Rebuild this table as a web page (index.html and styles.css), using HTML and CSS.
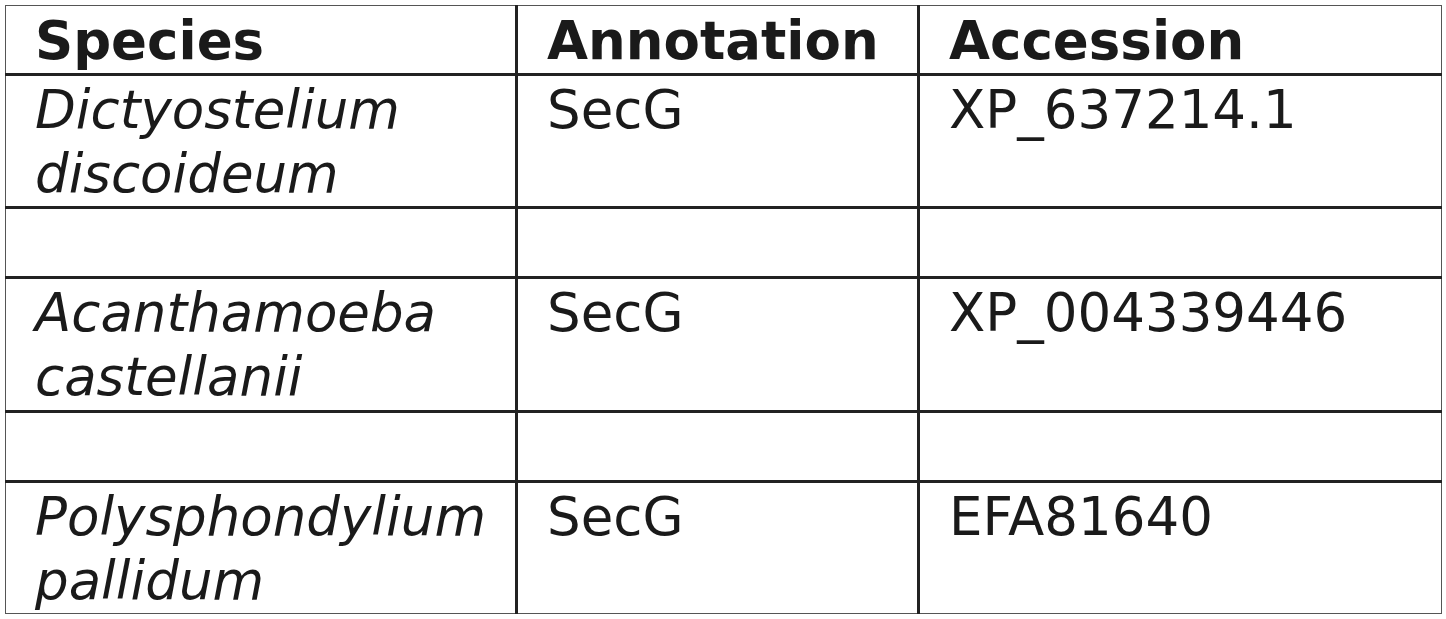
FILE: index.html
```html
<!DOCTYPE html>
<html>
<head>
<meta charset="utf-8">
<link rel="stylesheet" href="styles.css">
</head>
<body>
<table class="species-table">
  <colgroup>
    <col class="c1"><col class="c2"><col class="c3">
  </colgroup>
  <thead>
    <tr><th>Species</th><th>Annotation</th><th>Accession</th></tr>
  </thead>
  <tbody>
    <tr><td><i>Dictyostelium<br>discoideum</i></td><td>SecG</td><td>XP_637214.1</td></tr>
    <tr class="gap"><td>&nbsp;</td><td></td><td></td></tr>
    <tr class="tall"><td><i>Acanthamoeba<br>castellanii</i></td><td>SecG</td><td>XP_004339446</td></tr>
    <tr class="gap"><td>&nbsp;</td><td></td><td></td></tr>
    <tr class="last"><td><i>Polysphondylium<br>pallidum</i></td><td>SecG</td><td>EFA81640</td></tr>
  </tbody>
</table>
</body>
</html>
```

FILE: styles.css
```css
html, body {
  margin: 0;
  padding: 0;
  background: #ffffff;
}
body {
  padding: 5px 0 0 5px;
  font-family: "DejaVu Sans", Verdana, sans-serif;
  color: #1a1a1a;
}
.species-table {
  border-collapse: collapse;
  table-layout: fixed;
  width: 1436px;
  font-size: 53px;
  line-height: 64px;
  border: 1px solid #555555;
}
.c1 { width: 511px; }
.c2 { width: 402px; }
.c3 { width: 523px; }
.species-table th,
.species-table td {
  border-top: none;
  border-left: none;
  border-right: 3px solid #222222;
  border-bottom: 3px solid #222222;
  padding: 2px 10px 0 29px;
  text-align: left;
  vertical-align: top;
  white-space: nowrap;
}
.species-table th:last-child,
.species-table td:last-child {
  border-right: none;
}
.species-table tr.last td {
  border-bottom: none;
}
.species-table tr.gap td {
  padding-bottom: 1px;
}
.species-table tr.tall td {
  padding-bottom: 1px;
}
.species-table th {
  font-weight: bold;
  padding-top: 3px;
}
.species-table td {
  font-weight: normal;
}
.species-table i {
  font-style: italic;
}
```
